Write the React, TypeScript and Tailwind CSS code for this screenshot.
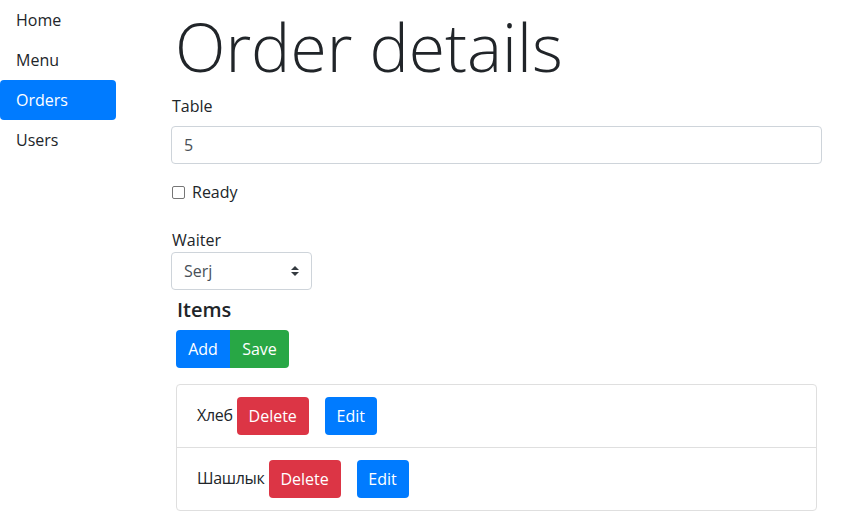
import React from "react";

export default function App() {
  const nav = ["Home", "Menu", "Orders", "Users"];
  const items = ["Хлеб", "Шашлык"];
  return (
    <div className="flex min-h-[527px] bg-white text-[16px] leading-6 text-[#212529] font-['Open_Sans','Noto_Sans',sans-serif]">
      <nav className="flex w-[116px] flex-col">
        {nav.map((n) => (
          <div
            key={n}
            className={
              n === "Orders"
                ? "flex h-10 items-center rounded-[4px] bg-[#007bff] px-4 text-white"
                : "flex h-10 items-center px-4 text-[#212529]"
            }
          >
            {n}
          </div>
        ))}
      </nav>
      <main className="ml-[55px] w-[651px]">
        <h1 className="mb-[2px] pl-1 text-[66px] font-light leading-[92px]">Order details</h1>
        <div className="mb-4">
          <div className="mb-2 pl-[1px]">Table</div>
          <div className="flex h-[38px] items-center rounded-[4px] border border-[#ced4da] px-3 text-[#495057]">
            5
          </div>
        </div>
        <div className="mb-6 flex h-6 items-center pl-[1px]">
          <span className="h-[13px] w-[13px] rounded-[2px] border border-[#767676] bg-white" />
          <span className="ml-[7px]">Ready</span>
        </div>
        <div className="h-6 pl-[1px]">Waiter</div>
        <div className="relative flex h-[38px] w-[141px] items-center rounded-[4px] border border-[#ced4da] pl-3 text-[#495057]">
          Serj
          <svg className="absolute right-[12px] top-[13px]" width="8" height="10" viewBox="0 0 4 5">
            <path d="M2 0L0 2h4zm0 5L0 3h4z" fill="#343a40" />
          </svg>
        </div>
        <div className="px-[5px] pt-[8px]">
          <h5 className="mb-2 text-[20px] font-semibold leading-6 pl-[1px]">Items</h5>
          <div className="flex">
            <button className="flex h-[38px] w-[54px] items-center justify-center rounded-l-[4px] bg-[#007bff] text-white">
              Add
            </button>
            <button className="flex h-[38px] w-[59px] items-center justify-center rounded-r-[4px] bg-[#28a745] text-white">
              Save
            </button>
          </div>
          <div className="mt-4 rounded-[4px] border border-[#dfdfdf]">
            {items.map((it, i) => (
              <div
                key={it}
                className={
                  "flex items-center px-5 py-3 " + (i > 0 ? "border-t border-[#dfdfdf]" : "")
                }
              >
                <span className="-mt-[2px] mr-1 tracking-[-0.3px]">{it}</span>
                <button className="flex h-[38px] w-[72px] items-center justify-center rounded-[4px] bg-[#dc3545] text-white">
                  Delete
                </button>
                <button className="ml-4 flex h-[38px] w-[52px] items-center justify-center rounded-[4px] bg-[#007bff] text-white">
                  Edit
                </button>
              </div>
            ))}
          </div>
        </div>
      </main>
    </div>
  );
}
